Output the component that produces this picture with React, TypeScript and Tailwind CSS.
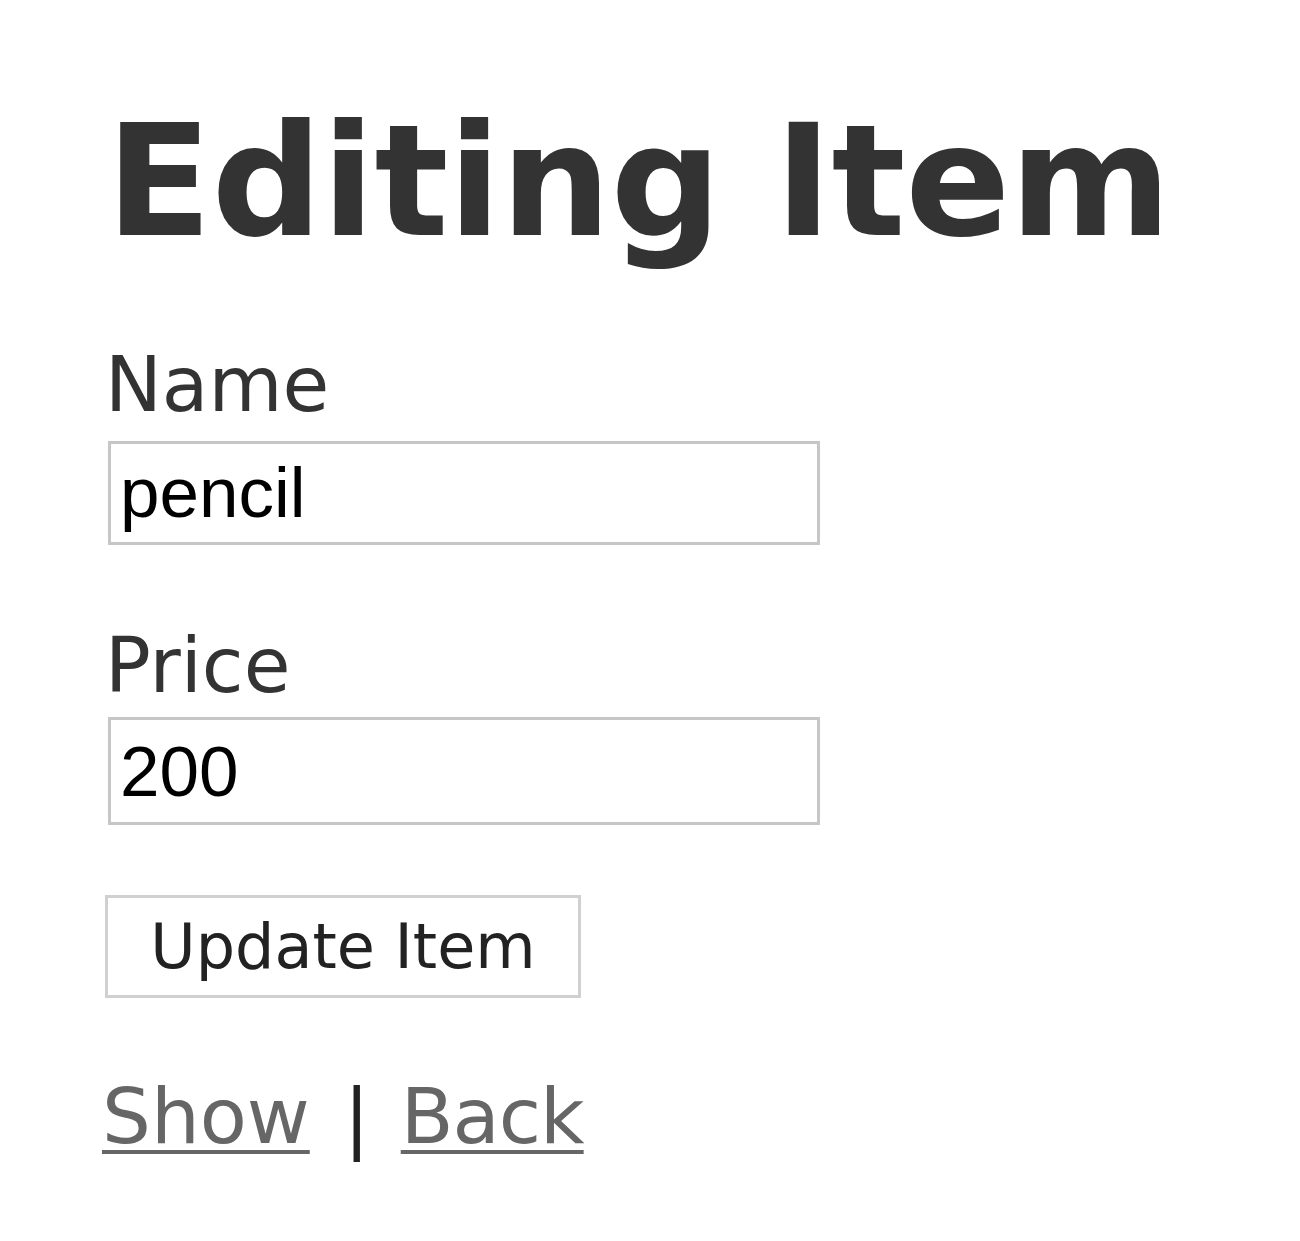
export default function App() {
  return (
    <div className="min-h-[1241px] bg-white pl-[105px] pt-[104px] text-[#333] font-['DejaVu_Sans',Verdana,sans-serif]">
      <h1 className="ml-[1px] text-[155px] font-bold leading-[155px] tracking-[-0.5px]">Editing Item</h1>

      <form className="mt-[88px]">
        <label className="block text-[76px] leading-[76px]">Name</label>
        <input
          type="text"
          defaultValue="pencil"
          className="mt-[18px] ml-[3px] block h-[104px] w-[712px] border-[3px] border-[#c6c6c6] bg-white pl-[9px] text-[71px] text-black outline-none font-['Liberation_Sans',Arial,sans-serif]"
        />

        <label className="mt-[83px] block text-[76px] leading-[76px]">Price</label>
        <input
          type="text"
          defaultValue="200"
          className="mt-[13px] ml-[3px] block h-[108px] w-[712px] border-[3px] border-[#c6c6c6] bg-white pl-[9px] text-[71px] text-black outline-none font-['Liberation_Sans',Arial,sans-serif]"
        />

        <button
          type="button"
          className="mt-[70px] block h-[103px] w-[476px] border-[3px] border-[#d0d0d0] bg-white text-center text-[62px] leading-none text-[#222]"
        >
          Update Item
        </button>
      </form>

      <div className="mt-[80px] -ml-[3px] text-[77px] leading-[77px]">
        <a href="#" className="text-[#666] underline decoration-[4px] underline-offset-[7px]">Show</a>
        <span className="ml-[34px] mr-[31px] text-[#222]">|</span>
        <a href="#" className="text-[#666] underline decoration-[4px] underline-offset-[7px] tracking-[-1px]">Back</a>
      </div>
    </div>
  );
}
